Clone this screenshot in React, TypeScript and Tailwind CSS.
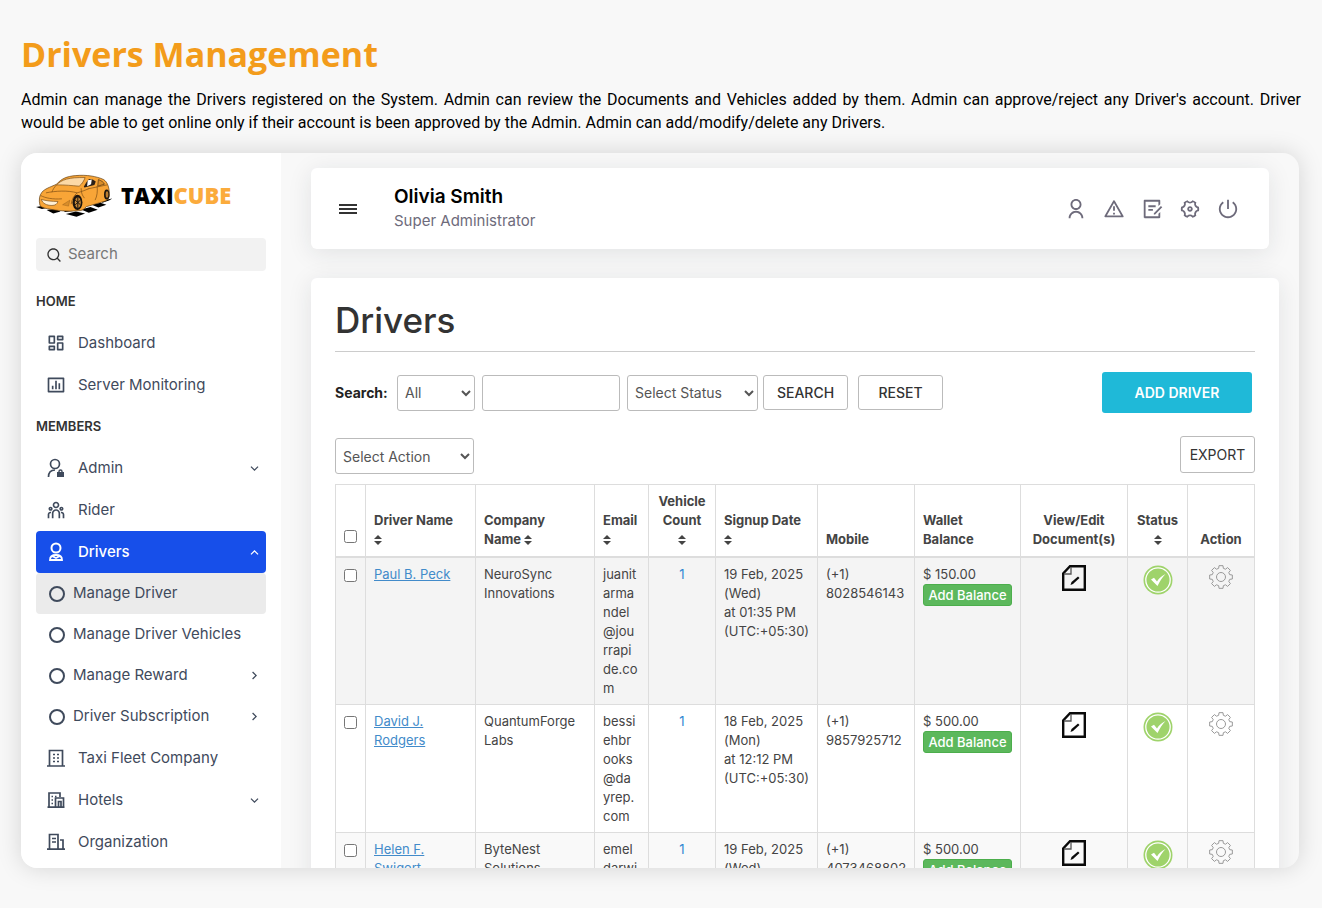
import React from 'react';
import {
  RiAlertLine,
  RiArrowDownSLine,
  RiArrowRightSLine,
  RiArrowUpSLine,
  RiBarChartBoxLine,
  RiDashboardLine,
  RiDraftLine,
  RiSearchLine,
  RiSettings4Line,
  RiShutDownLine,
  RiTeamLine,
  RiUserLine,
} from 'react-icons/ri';

type Driver = {
  name: string;
  company: string;
  email: string[];
  vehicles: number;
  signup: string[];
  mobile: string;
  balance: string;
};

const drivers: Driver[] = [
  {
    name: 'Paul B. Peck',
    company: 'NeuroSync Innovations',
    email: ['juanit', 'arma', 'ndel', '@jou', 'rrapi', 'de.co', 'm'],
    vehicles: 1,
    signup: ['19 Feb, 2025', '(Wed)', 'at 01:35 PM', '(UTC:+05:30)'],
    mobile: '8028546143',
    balance: '$ 150.00',
  },
  {
    name: 'David J. Rodgers',
    company: 'QuantumForge Labs',
    email: ['bessi', 'ehbr', 'ooks', '@da', 'yrep.', 'com'],
    vehicles: 1,
    signup: ['18 Feb, 2025', '(Mon)', 'at 12:12 PM', '(UTC:+05:30)'],
    mobile: '9857925712',
    balance: '$ 500.00',
  },
  {
    name: 'Helen F. Swigert',
    company: 'ByteNest Solutions',
    email: ['emel', 'darwi'],
    vehicles: 1,
    signup: ['19 Feb, 2025', '(Wed)'],
    mobile: '4073468802',
    balance: '$ 500.00',
  },
];

const TaxiLogo = () => (
  <svg viewBox="0 0 232 128" className="w-[77px] h-[43px] shrink-0" aria-hidden="true">
    <path d="M0 99l26-5 14 6-22 5zM32 108l24-4 18 8-22 6zM74 104l30-4 14 10-30 4zM90 120l30-8 28 6-26 10zM136 106l28-7 22 8-27 9zM168 92l26-6 18 6-24 8zM196 80l34-7-10 6-20 7z" fill="#000" />
    <path d="M12 94C8 76 10 64 18 54c8-10 24-15 44-24C76 14 92 6 120 4c32-3 62 2 84 12 12 8 18 26 17 50-2 8-8 14-16 16l-54 16c-6 8-12 12-24 12-30 3-62 0-92-6-10-2-20-5-23-10z" fill="#f8a537" stroke="#5b3a10" strokeWidth="2" />
    <path d="M62 32C78 16 98 9 148 10c-4 10-8 18-18 26-22-2-42-4-68-4z" fill="#fcd9a6" stroke="#7a4b12" strokeWidth="2" />
    <path d="M144 38c6-12 10-18 16-24 10 0 16 4 20 8l-4 10-30 8z" fill="#2a2018" />
    <path d="M156 18l12-2-2 14-12 6z" fill="#fff" />
    <path d="M188 16c10 4 16 8 18 14l-20 6z" fill="#d88d2a" stroke="#4a3010" strokeWidth="2" />
    <path d="M136 42c0 16 4 22 10 30M184 36c2 16 0 30-6 42M30 56c30-6 66-8 94 0 14-4 24-8 34-12M62 32c-8 8-12 16-14 22M124 56c-10 8-16 20-18 34M14 64c14 8 38 12 64 10M156 44l58-12" fill="none" stroke="#7a4b12" strokeWidth="2" />
    <path d="M16 76c14 4 32 6 50 6-2 8-8 12-18 12-16 0-28-6-32-18z" fill="#fff0d4" stroke="#7a4b12" strokeWidth="2" />
    <path d="M80 92l22-14-4 18z" fill="#d88d2a" stroke="#7a4b12" />
    <ellipse cx="125" cy="85" rx="15" ry="23" fill="#1c150e" />
    <ellipse cx="126" cy="85" rx="9" ry="16" fill="#c68a3a" />
    <path d="M126 69v32M118 78l16 14M118 92l16-14" stroke="#1c150e" strokeWidth="3" />
    <ellipse cx="213" cy="61" rx="8" ry="15" fill="#1c150e" />
    <ellipse cx="214" cy="61" rx="4" ry="10" fill="#b97c30" />
  </svg>
);

const AdminIcon = () => (
  <svg viewBox="0 0 20 20" className="w-5 h-5" fill="none" stroke="currentColor" strokeWidth="1.700" aria-hidden="true">
    <circle cx="9" cy="6" r="4.500" />
    <path d="M2.500 19c0-4.500 2.500-7 6.500-7" />
    <path d="M13 14.500v-1a1.500 1.500 0 0 1 3 0v1" strokeWidth="1.400" />
    <rect x="11" y="14" width="7" height="5" fill="currentColor" stroke="none" />
  </svg>
);

const DriverIcon = () => (
  <svg viewBox="0 0 20 20" className="w-5 h-5" fill="none" stroke="currentColor" strokeWidth="2" aria-hidden="true">
    <circle cx="10" cy="6" r="4.500" />
    <path d="M4 18c0-3.500 2-5 6-5s6 1.500 6 5zM6 14l4 2 4-2M10 15v3" strokeWidth="1.800" />
  </svg>
);

const FleetIcon = () => (
  <svg viewBox="0 0 20 20" className="w-5 h-5" fill="none" stroke="currentColor" strokeWidth="1.700" aria-hidden="true">
    <path d="M3.500 18V2.500h13V18M1 18h18" />
    <path d="M7 6.500h2m2 0h2M7 10h2m2 0h2M7 13.500h2m2 0h2" />
  </svg>
);

const HotelIcon = () => (
  <svg viewBox="0 0 20 20" className="w-5 h-5" fill="none" stroke="currentColor" strokeWidth="1.700" aria-hidden="true">
    <path d="M3 17V3h11v4M1.500 17.200h17M9.500 17V8h8v9M12.500 17v-5.500h2.500V17" />
    <path d="M5.500 6.500H7m2 0h1.500M5.500 10H7M5.500 13.500H7" />
  </svg>
);

const OrganizationIcon = () => (
  <svg viewBox="0 0 20 20" className="w-5 h-5" fill="none" stroke="currentColor" strokeWidth="1.700" aria-hidden="true">
    <path d="M3.500 17V2.500H12V17M1 17.200h18M14 8h3v9" />
    <path d="M6 6.500h4M6 10h4" />
  </svg>
);

const DocumentIcon = () => (
  <svg viewBox="0 0 24 26" className="w-6 h-[26px]" fill="none" aria-hidden="true">
    <path d="M8 1.200h14.800v23.600H1.200V8.500z" stroke="#0a0a0a" strokeWidth="2.400" />
    <path d="M9 2v7H2" stroke="#555" strokeWidth="1.300" />
    <path d="M8.500 20l1-3 6.500-5.500 1.500 1.500-6.500 6z" fill="#0a0a0a" />
  </svg>
);

const StatusIcon = () => (
  <svg viewBox="0 0 30 30" className="w-[30px] h-[30px]" aria-hidden="true">
    <circle cx="15" cy="15" r="14.500" fill="#9fd36b" />
    <circle cx="15" cy="15" r="12.200" fill="none" stroke="#fff" strokeWidth="1.300" />
    <path d="M8 14.500l3-1.800 3 3.800c2-3 4-5.300 8.500-7.500-3.500 3.500-5.500 7-8 12z" fill="#fff" />
  </svg>
);

// eight teeth, each one described by [angle offset, radius] pairs
const gearPoints = Array.from({ length: 8 }, (_, tooth) =>
  [[-15, 9], [-10, 11.500], [10, 11.500], [15, 9]].map(([offset, radius]) => {
    const angle = ((tooth * 45 + offset) * Math.PI) / 180;
    return `${(12 + radius * Math.cos(angle)).toFixed(2)},${(12 + radius * Math.sin(angle)).toFixed(2)}`;
  }).join(' ')
).join(' ');

const GearIcon = () => (
  <svg viewBox="0 0 24 24" className="w-6 h-6" fill="none" stroke="#999" strokeWidth="1" strokeLinejoin="round" aria-hidden="true">
    <circle cx="12" cy="12" r="4.500" />
    <polygon points={gearPoints} />
  </svg>
);

const SortIcon = () => (
  <svg viewBox="0 0 8 12" className="inline w-2 h-3" fill="currentColor" aria-hidden="true">
    <path d="M4 1l4 4H0zM0 7h8l-4 4z" />
  </svg>
);

const NavItem = ({ icon, label, arrow, active = false }: { icon: React.ReactNode; label: string; arrow?: React.ReactNode; active?: boolean }) => (
  <a
    href="#"
    className={`flex items-center h-[42px] pl-[10px] pr-1 rounded ${
      active ? 'bg-[#174fea] text-white font-medium' : 'text-[#3f4a5c]'
    }`}
  >
    <span className="w-5 mr-3 flex justify-center text-[20px]">{icon}</span>
    <span className="grow">{label}</span>
    {arrow}
  </a>
);

const SubItem = ({ label, arrow = false, active = false }: { label: string; arrow?: boolean; active?: boolean }) => (
  <a href="#" className={`flex items-center h-[41px] pl-[13px] pr-1 rounded text-[#3f4a5c] ${active ? 'bg-[#ebebeb]' : ''}`}>
    <span className="w-4 h-4 mr-2 rounded-full border-2 border-[#3f4a5c]" />
    <span className="grow">{label}</span>
    {arrow && <RiArrowRightSLine />}
  </a>
);

const Sidebar = () => (
  <aside className="w-[260px] shrink-0 bg-white px-[15px] pt-[18px] text-[15px]">
    <a href="#" className="flex items-center gap-2 h-12 mb-[19px]">
      <TaxiLogo />
      <span className="font-['Open_Sans',sans-serif] font-extrabold text-[22px] text-black">
        TAXI<span className="text-[#fbab3c]">CUBE</span>
      </span>
    </a>
    <label className="flex items-center gap-1.5 h-[33px] px-[10px] rounded bg-[#f2f2f2] text-[#333]">
      <RiSearchLine className="w-4 h-4 shrink-0" />
      <input type="text" placeholder="Search" aria-label="Search menu" className="w-full bg-transparent outline-none placeholder:text-[#777]" />
    </label>
    <h2 className="flex items-center h-[41px] mt-[10px] text-[13px] font-semibold text-[#333]">HOME</h2>
    <NavItem icon={<RiDashboardLine />} label="Dashboard" />
    <NavItem icon={<RiBarChartBoxLine />} label="Server Monitoring" />
    <h2 className="flex items-center h-[41px] text-[13px] font-semibold text-[#333]">MEMBERS</h2>
    <NavItem icon={<AdminIcon />} label="Admin" arrow={<RiArrowDownSLine />} />
    <NavItem icon={<RiTeamLine />} label="Rider" />
    <NavItem icon={<DriverIcon />} label="Drivers" arrow={<RiArrowUpSLine />} active />
    <SubItem label="Manage Driver" active />
    <SubItem label="Manage Driver Vehicles" />
    <SubItem label="Manage Reward" arrow />
    <SubItem label="Driver Subscription" arrow />
    <NavItem icon={<FleetIcon />} label="Taxi Fleet Company" />
    <NavItem icon={<HotelIcon />} label="Hotels" arrow={<RiArrowDownSLine />} />
    <NavItem icon={<OrganizationIcon />} label="Organization" />
  </aside>
);

const TopBar = () => (
  <header className="flex items-center h-[81px] mr-[10px] pl-7 pr-[30px] rounded-md bg-white shadow-[0_4px_24px_rgba(34,41,47,0.1)]">
    <button type="button" aria-label="Toggle menu" className="flex flex-col gap-0.5 mr-[37px]">
      <span className="block w-[18px] h-0.5 bg-[#333]" />
      <span className="block w-[18px] h-0.5 bg-[#333]" />
      <span className="block w-[18px] h-0.5 bg-[#333]" />
    </button>
    <div className="grow">
      <p className="text-[19px] leading-6 font-semibold text-black">Olivia Smith</p>
      <p className="text-[15px] leading-6 text-[#6e6b7b]">Super Administrator</p>
    </div>
    <div className="flex gap-4 text-[22px] text-[#6e6b7b]">
      <button type="button" aria-label="Profile"><RiUserLine /></button>
      <button type="button" aria-label="Alerts"><RiAlertLine /></button>
      <button type="button" aria-label="Notes"><RiDraftLine /></button>
      <button type="button" aria-label="Settings"><RiSettings4Line /></button>
      <button type="button" aria-label="Log out"><RiShutDownLine /></button>
    </div>
  </header>
);

const Filters = () => (
  <form className="flex items-center h-[41px] mt-5 pr-[3px]" onSubmit={(e) => e.preventDefault()}>
    <label htmlFor="search-field" className="w-[62px] font-bold text-[#222]">Search:</label>
    <select id="search-field" className="w-[78px] h-9 px-[3px] mr-[7px] border border-[#bbb] rounded-[3px] bg-white text-[#555]">
      <option>All</option>
    </select>
    <input type="text" aria-label="Search text" className="w-[138px] h-9 px-2 mr-[7px] border border-[#bbb] rounded-[3px]" />
    <select aria-label="Status" className="w-[131px] h-9 px-[3px] mr-[5px] border border-[#bbb] rounded-[3px] bg-white text-[#555]">
      <option>Select Status</option>
    </select>
    <button type="submit" className="w-[85px] h-[35px] mr-[10px] border border-[#bbb] rounded-[3px] font-medium text-[#333]">SEARCH</button>
    <button type="reset" className="w-[85px] h-[35px] border border-[#bbb] rounded-[3px] font-medium text-[#333]">RESET</button>
    <button type="button" className="w-[150px] h-[41px] ml-auto rounded-[3px] bg-[#1fb9d8] font-semibold text-white">ADD DRIVER</button>
  </form>
);

const th = 'border border-[#ddd] border-b-2 px-2 py-[7px] align-bottom font-bold';
const td = 'border border-[#ddd] px-2 pt-[7px] pb-1.5 align-top';

const DriversTable = () => (
  <table className="w-full mt-[10px] table-fixed border-collapse text-left text-[13px] leading-[19px] text-[#444]">
    <colgroup>
      <col className="w-[30px]" />
      <col className="w-[110px]" />
      <col className="w-[119px]" />
      <col className="w-[54px]" />
      <col className="w-[67px]" />
      <col className="w-[102px]" />
      <col className="w-[97px]" />
      <col className="w-[106px]" />
      <col className="w-[107px]" />
      <col className="w-[60px]" />
      <col className="w-[67px]" />
    </colgroup>
    <thead>
      <tr>
        <th className={th}><input type="checkbox" aria-label="Select all" className="block w-[13px] h-[13px] mb-1.5" /></th>
        <th className={th}>Driver Name<br /><SortIcon /></th>
        <th className={th}>Company<br />Name <SortIcon /></th>
        <th className={th}>Email<br /><SortIcon /></th>
        <th className={`${th} text-center`}>Vehicle Count<br /><SortIcon /></th>
        <th className={th}>Signup Date<br /><SortIcon /></th>
        <th className={th}>Mobile</th>
        <th className={th}>Wallet<br />Balance</th>
        <th className={`${th} text-center`}>View/Edit Document(s)</th>
        <th className={`${th} text-center`}>Status<br /><SortIcon /></th>
        <th className={`${th} text-center`}>Action</th>
      </tr>
    </thead>
    <tbody>
      {drivers.map((d, i) => (
        <tr key={d.name} className={i === 0 ? 'bg-[#f4f4f4]' : i % 2 === 0 ? 'bg-[#f9f9f9]' : 'bg-white'}>
          <td className={td}><input type="checkbox" aria-label={`Select ${d.name}`} className="block w-[13px] h-[13px] mt-1" /></td>
          <td className={td}><a href="#" className="text-[#428bca] underline">{d.name}</a></td>
          <td className={td}>{d.company}</td>
          <td className={td}>
            {d.email.map((part) => (
              <React.Fragment key={part}>{part}<br /></React.Fragment>
            ))}
          </td>
          <td className={`${td} text-center`}><a href="#" className="text-[#2f86d2]">{d.vehicles}</a></td>
          <td className={`${td} whitespace-nowrap`}>
            {d.signup.map((line) => (
              <React.Fragment key={line}>{line}<br /></React.Fragment>
            ))}
          </td>
          <td className={td}>(+1)<br />{d.mobile}</td>
          <td className={td}>
            {d.balance}
            <button type="button" className="block w-full h-[22px] rounded-[3px] border border-[#4cae4c] bg-[#5cb85c] text-[13px] leading-5 font-medium whitespace-nowrap text-white">
              Add Balance
            </button>
          </td>
          <td className={td}><a href="#" aria-label="View documents" className="flex justify-center"><DocumentIcon /></a></td>
          <td className={td}><span className="flex justify-center"><StatusIcon /></span></td>
          <td className={td}><button type="button" aria-label="Actions" className="flex w-full justify-center"><GearIcon /></button></td>
        </tr>
      ))}
    </tbody>
  </table>
);

const App: React.FC = () => (
  <div className="flex flex-col h-screen px-[21px] pt-8 pb-10 bg-[#f8f8f8] font-[Inter,sans-serif]">
    <h1 className="font-['Open_Sans',sans-serif] text-[34px] leading-[44px] font-bold text-[#f39c1b]">Drivers Management</h1>
    <p className="mt-3 font-[Roboto,sans-serif] text-[16px] leading-[23px] text-justify text-black">
      Admin can manage the Drivers registered on the System. Admin can review the Documents and Vehicles added by them. Admin can
      approve/reject any Driver's account. Driver would be able to get online only if their account is been approved by the Admin.
      Admin can add/modify/delete any Drivers.
    </p>
    <div className="flex grow min-h-0 mt-[19px] mr-0.5 rounded-2xl overflow-hidden bg-[#f8f8f8] shadow-[0_0_24px_rgba(0,0,0,0.15)]">
      <Sidebar />
      <main className="grow min-w-0 pt-[15px] pl-[30px] pr-5">
        <TopBar />
        <section className="mt-[29px] px-6 pt-[22px] pb-6 rounded-md bg-white shadow-[0_4px_24px_rgba(34,41,47,0.1)] text-[14px]">
          <h2 className="pb-[11px] border-b border-[#ccc] text-[35px] leading-10 font-medium text-[#333]">Drivers</h2>
          <Filters />
          <div className="flex items-start justify-between h-[38px] mt-[23px]">
            <select aria-label="Action" className="self-end w-[139px] h-9 px-[3px] border border-[#bbb] rounded-[3px] bg-white text-[#555]">
              <option>Select Action</option>
            </select>
            <button type="button" className="w-[75px] h-[37px] border border-[#bbb] rounded-[3px] text-[#333]">EXPORT</button>
          </div>
          <DriversTable />
        </section>
      </main>
    </div>
  </div>
);

export default App;
